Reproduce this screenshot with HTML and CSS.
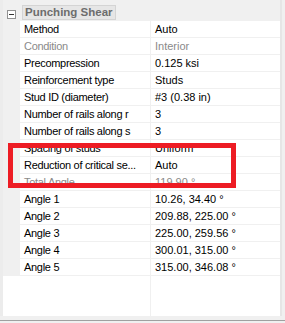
FILE: index.html
```html
<!DOCTYPE html>
<html lang="en">
<head>
<meta charset="utf-8">
<title>Punching Shear</title>
<link rel="stylesheet" href="styles.css">
</head>
<body>
<div class="frame">
  <div class="main">
    <div class="edge"></div>
    <div class="grid">
      <div class="peek"></div>
      <div class="cat">
        <span class="toggle">
          <svg width="9" height="9" viewBox="0 0 9 9">
            <rect x="0.5" y="0.5" width="8" height="8" fill="#fff" stroke="#919191"/>
            <line x1="2" y1="4.5" x2="7" y2="4.5" stroke="#333" stroke-width="1"/>
          </svg>
        </span>
        <span class="cat-name">Punching Shear</span>
      </div>

      <div class="row"><span class="gut"></span><span class="lbl">Method</span><span class="sep"></span><span class="val">Auto</span></div>
      <div class="row off"><span class="gut"></span><span class="lbl">Condition</span><span class="sep"></span><span class="val">Interior</span></div>
      <div class="row"><span class="gut"></span><span class="lbl">Precompression</span><span class="sep"></span><span class="val">0.125 ksi</span></div>
      <div class="row"><span class="gut"></span><span class="lbl">Reinforcement type</span><span class="sep"></span><span class="val">Studs</span></div>
      <div class="row"><span class="gut"></span><span class="lbl">Stud ID (diameter)</span><span class="sep"></span><span class="val">#3 (0.38 in)</span></div>
      <div class="row"><span class="gut"></span><span class="lbl">Number of rails along r</span><span class="sep"></span><span class="val">3</span></div>
      <div class="row"><span class="gut"></span><span class="lbl">Number of rails along s</span><span class="sep"></span><span class="val">3</span></div>
      <div class="row"><span class="gut"></span><span class="lbl">Spacing of studs</span><span class="sep"></span><span class="val">Uniform</span></div>
      <div class="row"><span class="gut"></span><span class="lbl">Reduction of critical se...</span><span class="sep"></span><span class="val">Auto</span></div>
      <div class="row off"><span class="gut"></span><span class="lbl">Total Angle</span><span class="sep"></span><span class="val">119.90 °</span></div>
      <div class="row"><span class="gut"></span><span class="lbl">Angle 1</span><span class="sep"></span><span class="val">10.26, 34.40 °</span></div>
      <div class="row"><span class="gut"></span><span class="lbl">Angle 2</span><span class="sep"></span><span class="val">209.88, 225.00 °</span></div>
      <div class="row"><span class="gut"></span><span class="lbl">Angle 3</span><span class="sep"></span><span class="val">225.00, 259.56 °</span></div>
      <div class="row"><span class="gut"></span><span class="lbl">Angle 4</span><span class="sep"></span><span class="val">300.01, 315.00 °</span></div>
      <div class="row"><span class="gut"></span><span class="lbl">Angle 5</span><span class="sep"></span><span class="val">315.00, 346.08 °</span></div>

      <div class="blank"><span class="blank-l"></span><span class="sep"></span><span class="blank-r"></span></div>
    </div>
    <div class="side"></div>
  </div>
  <div class="bottom"></div>
  <div class="mark"></div>
</div>
</body>
</html>
```

FILE: styles.css
```css
*{margin:0; padding:0; box-sizing:border-box;}
body{font:11px/1 "Liberation Sans", Arial, sans-serif; color:#000; background:#fff;}

.frame{width:285px; height:323px; background:#f0f0f0; position:relative; overflow:hidden;}
.main{display:flex; height:316px;}
.edge{width:3px; background:#ececec;}
.grid{width:277px; display:flex; flex-direction:column; background:#fff;}
.side{width:5px; background:#f0f0f0; border-left:2px solid #e6e6e6;}
.bottom{height:5px; background:#f0f0f0; border-bottom:1px solid #a0a0a0;}

.peek{height:4px; background:#f0f0f0;}

/* category header */
.cat{height:17px; background:#f0f0f0; display:flex; align-items:center;}
.toggle{width:9px; height:9px; margin-left:4px; margin-top:3px; display:block;}
.toggle svg{display:block;}
.cat-name{margin-left:6px; height:15px; padding:0 2px 0 2px; border:1px solid #d4d4d4; background:#e6e6e6;
  font-weight:bold; color:#6d6d6d; line-height:13px; font-size:11.5px;}

/* property rows */
.row{display:grid; grid-template-columns:17px 130px 1px 1fr; height:17px; border-bottom:1px solid #f0f0f0;}
.gut{background:#f0f0f0;}
.lbl{padding-left:4px; line-height:16px; white-space:nowrap; overflow:hidden; letter-spacing:-0.3px;}
.sep{background:#f0f0f0;}
.val{padding-left:4px; line-height:16px; white-space:nowrap; overflow:hidden;}
.off .lbl, .off .val{color:#8a8a8a;}

.blank{flex:1; display:grid; grid-template-columns:147px 1px 1fr;}

/* red annotation box */
.mark{position:absolute; left:8px; top:143px; width:228px; height:45px; border:5px solid #ed1c24;}
```
